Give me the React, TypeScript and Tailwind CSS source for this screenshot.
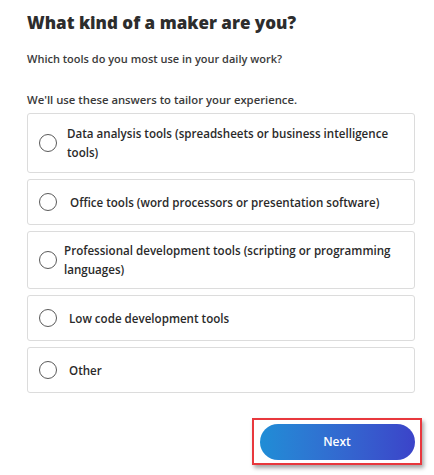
import React, { useState } from "react";

const options = [
  { label: "Data analysis tools (spreadsheets or business intelligence tools)", pad: "ml-[10px]", h: "h-[60px]" },
  { label: "Office tools (word processors or presentation software)", pad: "ml-[13px]", h: "h-[46px]" },
  { label: "Professional development tools (scripting or programming languages)", pad: "ml-[7px]", h: "h-[58px]" },
  { label: "Low code development tools", pad: "ml-[12px]", h: "h-[46px]" },
  { label: "Other", pad: "ml-[12px]", h: "h-[46px]" },
];

const App: React.FC = () => {
  const [picked, setPicked] = useState<number | null>(null);

  return (
    <div className="w-[434px] h-[475px] bg-white text-[#333] font-['Open_Sans',sans-serif] overflow-hidden">
      <div className="pl-[27px] pr-[19px] pt-[8px]">
        <h1 className="text-[17px] leading-[30px] font-extrabold text-[#2d2d2d]">
          What kind of a maker are you?
        </h1>
        <p className="mt-[12px] text-[11px] leading-[18px] font-semibold text-[#3a3a3a]">
          Which tools do you most use in your daily work?
        </p>
        <p className="mt-[23px] text-[11.3px] leading-[18px] font-semibold text-[#3a3a3a]">
          We'll use these answers to tailor your experience.
        </p>

        <div className="mt-[4px] flex flex-col gap-[6px]">
          {options.map((opt, i) => (
            <label
              key={i}
              className={`flex items-center ${opt.h} pl-[11px] pr-[12px] border border-[#dcdcdc] rounded-[3px] cursor-pointer`}
              onClick={() => setPicked(i)}
            >
              <span className="shrink-0 w-[18px] h-[18px] rounded-full border-[1.5px] border-[#5a5a5a] flex items-center justify-center">
                {picked === i && <span className="w-[8px] h-[8px] rounded-full bg-[#333]" />}
              </span>
              <span className={`${opt.pad} text-[11.6px] leading-[19px] font-semibold text-[#2a2a2a]`}>
                {opt.label}
              </span>
            </label>
          ))}
        </div>
      </div>

      <div className="flex justify-end pr-[12px] mt-[25px]">
        <div className="w-[170px] h-[47px] border-2 border-[#e8383d] shadow-[2px_3px_4px_rgba(0,0,0,0.35)] flex items-center justify-center">
          <button className="w-[155px] h-[36px] rounded-full bg-gradient-to-r from-[#1f8dd6] to-[#3b43c9] text-white text-[12px] font-semibold">
            Next
          </button>
        </div>
      </div>
    </div>
  );
};

export default App;
